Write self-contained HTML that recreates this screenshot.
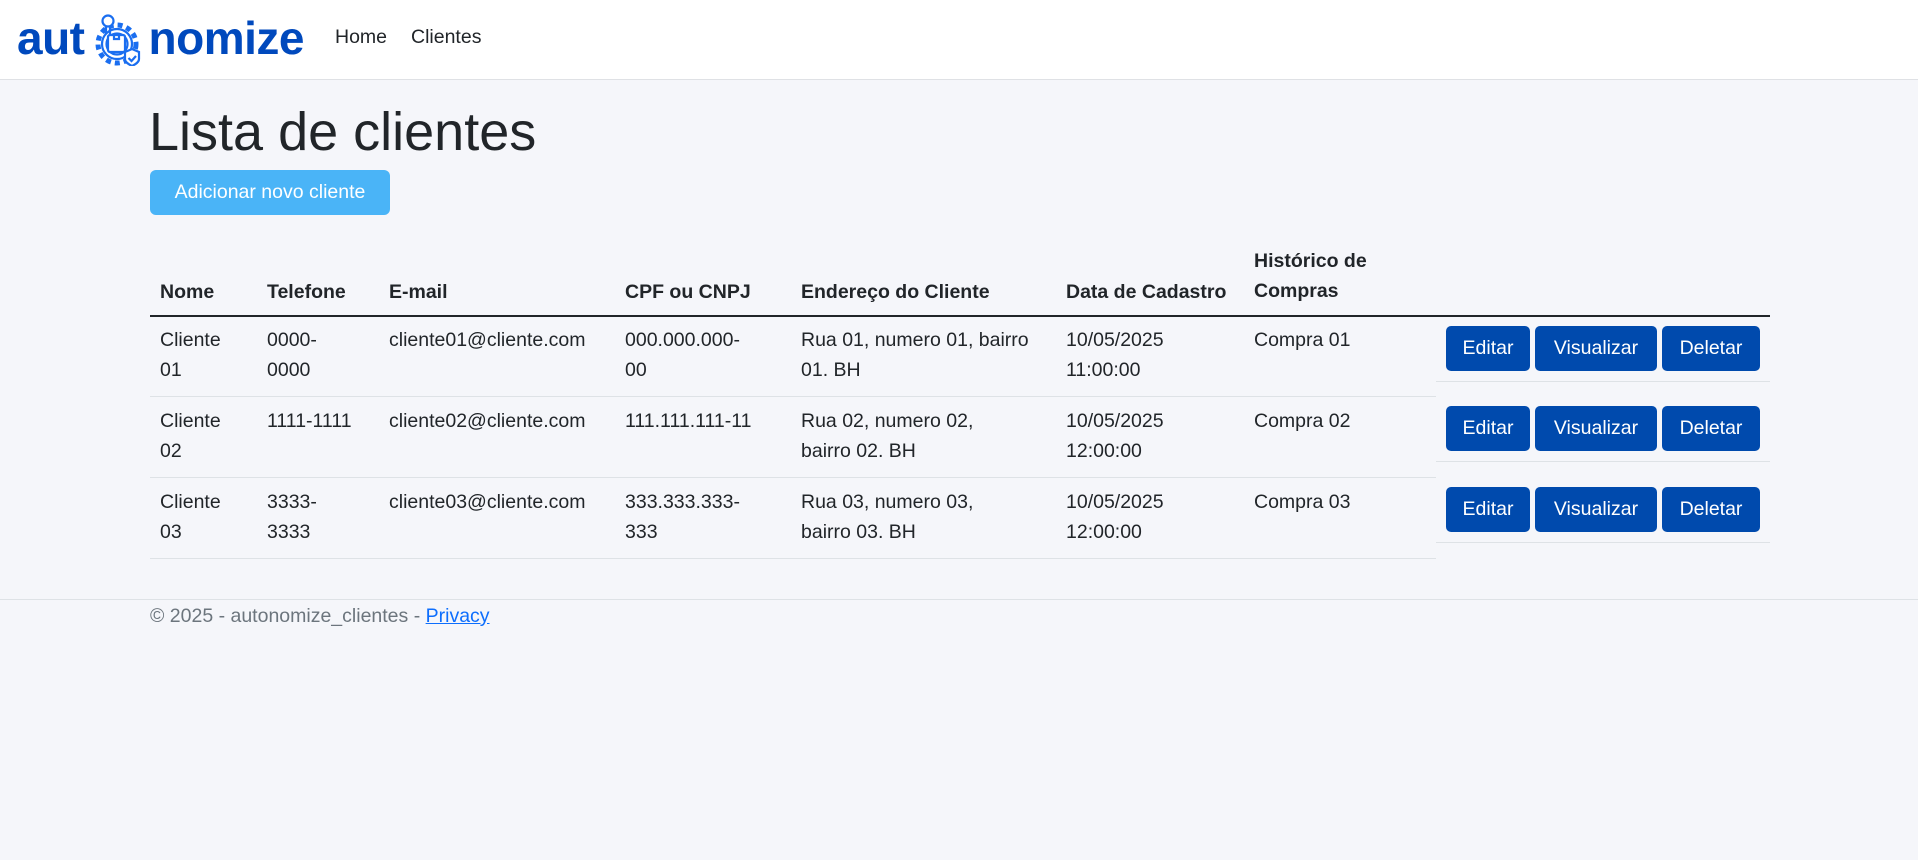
<!DOCTYPE html>
<html><head><meta charset="utf-8"><style>
*{margin:0;padding:0;box-sizing:border-box}
body{width:1918px;height:860px;background:#f5f6fa;font-family:"Liberation Sans",Arial,sans-serif;color:#212529;position:relative;overflow:hidden}
.nav{position:absolute;left:0;top:0;width:1918px;height:80px;background:#fff;border-bottom:1px solid #dfe1e5}
.logo{position:absolute;top:10px;left:17px;font-weight:bold;font-size:46px;color:#0049bd;letter-spacing:-0.5px;line-height:56px;white-space:nowrap}
.navlink{position:absolute;top:26px;font-size:19.5px;color:#212529}
.a{position:absolute;white-space:nowrap;font-size:19.5px;line-height:30px}
h1{position:absolute;left:149px;top:100px;font-size:54px;font-weight:normal;line-height:64px}
.add{position:absolute;left:150px;top:170px;width:240px;height:45px;background:#4ab4f7;border-radius:6px;color:#fff;font-size:19.5px;line-height:45px;text-align:center}
.th{font-weight:bold}
.line{position:absolute;height:1px;background:#dee2e6}
.btn{position:absolute;height:45px;background:#004aad;border-radius:5px;color:#fff;font-size:19.5px;line-height:45px;text-align:center}
.foot{position:absolute;left:0;top:599px;width:1918px;height:1px;background:#dee2e6}
</style></head><body>
<div class="nav">
<div class="logo">aut<svg width="46" height="52" viewBox="0 0 46 52" style="vertical-align:-12px;margin:0 8px 0 10px">
<g fill="none" stroke="#1a6ef0" stroke-width="2.2">
<circle cx="22" cy="30" r="19" stroke-width="5" stroke-dasharray="5 4"/>
<circle cx="22" cy="30" r="15"/>
<circle cx="22" cy="30" r="10.5"/>
<circle cx="13" cy="7" r="5.5" fill="#fff"/>
<path d="M11 12v8M15 12v8"/>
<rect x="13" y="21" width="17" height="17" rx="2" fill="#fff"/>
<path d="M19 21v4h5v-4"/>
<path d="M30 38l7-3 7 3v7c0 3-3 5-7 7-4-2-7-4-7-7z" fill="#fff"/>
<path d="M33.5 44l3 3 4.5-5"/>
</g></svg>nomize</div>
<div class="navlink" style="left:335px">Home</div>
<div class="navlink" style="left:411px">Clientes</div>
</div>
<h1>Lista de clientes</h1>
<div class="add">Adicionar novo cliente</div>

<div class="a th" style="left:160px;top:277px">Nome</div>
<div class="a th" style="left:267px;top:277px">Telefone</div>
<div class="a th" style="left:389px;top:277px">E-mail</div>
<div class="a th" style="left:625px;top:277px">CPF ou CNPJ</div>
<div class="a th" style="left:801px;top:277px">Endereço do Cliente</div>
<div class="a th" style="left:1066px;top:277px">Data de Cadastro</div>
<div class="a th" style="left:1254px;top:246px">Histórico de<br>Compras</div>
<div class="line" style="left:150px;top:315px;width:1620px;height:1.5px;background:#212529"></div>

<div class="a" style="left:160px;top:325px">Cliente<br>01</div>
<div class="a" style="left:267px;top:325px">0000-<br>0000</div>
<div class="a" style="left:389px;top:325px">cliente01@cliente.com</div>
<div class="a" style="left:625px;top:325px">000.000.000-<br>00</div>
<div class="a" style="left:801px;top:325px">Rua 01, numero 01, bairro<br>01. BH</div>
<div class="a" style="left:1066px;top:325px">10/05/2025<br>11:00:00</div>
<div class="a" style="left:1254px;top:325px">Compra 01</div>
<div class="line" style="left:150px;top:396px;width:1286px"></div>
<div class="line" style="left:1436px;top:381px;width:334px"></div>

<div class="a" style="left:160px;top:406px">Cliente<br>02</div>
<div class="a" style="left:267px;top:406px">1111-1111</div>
<div class="a" style="left:389px;top:406px">cliente02@cliente.com</div>
<div class="a" style="left:625px;top:406px">111.111.111-11</div>
<div class="a" style="left:801px;top:406px">Rua 02, numero 02,<br>bairro 02. BH</div>
<div class="a" style="left:1066px;top:406px">10/05/2025<br>12:00:00</div>
<div class="a" style="left:1254px;top:406px">Compra 02</div>
<div class="line" style="left:150px;top:477px;width:1286px"></div>
<div class="line" style="left:1436px;top:461px;width:334px"></div>

<div class="a" style="left:160px;top:487px">Cliente<br>03</div>
<div class="a" style="left:267px;top:487px">3333-<br>3333</div>
<div class="a" style="left:389px;top:487px">cliente03@cliente.com</div>
<div class="a" style="left:625px;top:487px">333.333.333-<br>333</div>
<div class="a" style="left:801px;top:487px">Rua 03, numero 03,<br>bairro 03. BH</div>
<div class="a" style="left:1066px;top:487px">10/05/2025<br>12:00:00</div>
<div class="a" style="left:1254px;top:487px">Compra 03</div>
<div class="line" style="left:150px;top:558px;width:1286px"></div>
<div class="line" style="left:1436px;top:542px;width:334px"></div>

<div class="btn" style="left:1446px;top:326px;width:84px">Editar</div>
<div class="btn" style="left:1535px;top:326px;width:122px">Visualizar</div>
<div class="btn" style="left:1662px;top:326px;width:98px">Deletar</div>
<div class="btn" style="left:1446px;top:406px;width:84px">Editar</div>
<div class="btn" style="left:1535px;top:406px;width:122px">Visualizar</div>
<div class="btn" style="left:1662px;top:406px;width:98px">Deletar</div>
<div class="btn" style="left:1446px;top:487px;width:84px">Editar</div>
<div class="btn" style="left:1535px;top:487px;width:122px">Visualizar</div>
<div class="btn" style="left:1662px;top:487px;width:98px">Deletar</div>

<div class="foot"></div>
<div class="a" style="left:150px;top:601px;color:#6c757d">© 2025 - autonomize_clientes - <span style="color:#0d6efd;text-decoration:underline">Privacy</span></div>
</body></html>
